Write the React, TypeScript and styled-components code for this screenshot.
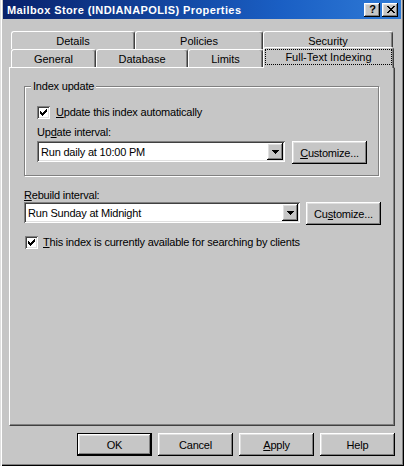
import React from "react";
import styled, { createGlobalStyle, css } from "styled-components";

const FACE = "#c6c6c6";

const GlobalStyle = createGlobalStyle`
  html, body { margin: 0; padding: 0; background: ${FACE}; }
  body {
    font-family: "Liberation Sans", Arial, sans-serif;
    font-size: 11px;
    letter-spacing: -0.2px;
    color: #000;
  }
  *, *::before, *::after { box-sizing: border-box; }
`;

const raised = css`
  box-shadow: inset -1px -1px 0 #000, inset 1px 1px 0 #fff,
    inset -2px -2px 0 #808080, inset 2px 2px 0 #dfdfdf;
`;

const sunken = css`
  box-shadow: inset 1px 1px 0 #808080, inset -1px -1px 0 #fff,
    inset 2px 2px 0 #404040, inset -2px -2px 0 #dfdfdf;
`;

const Window = styled.div`
  width: 404px;
  height: 466px;
  background: ${FACE};
  display: flex;
  flex-direction: column;
  padding: 0 3px 3px 3px;
  box-shadow: inset 1px 0 0 #dfdfdf, inset 2px 0 0 #fff, inset -1px -1px 0 #000,
    inset -2px -2px 0 #808080;
`;

const TitleBar = styled.div`
  flex: none;
  height: 19px;
  display: flex;
  align-items: center;
  padding: 0 3px 0 4px;
  background: linear-gradient(to right, #08216b, #1a5fc4 70%, #2f7ad6);
  color: #fff;
  font-weight: bold;
  font-size: 11px;
  letter-spacing: 0.4px;
`;

const TitleText = styled.span`
  flex: 1;
  white-space: nowrap;
`;

const CaptionButtons = styled.div`
  display: flex;
  gap: 2px;
  letter-spacing: 0;
`;

const CaptionButton = styled.div`
  width: 16px;
  height: 14px;
  background: ${FACE};
  ${raised};
  display: flex;
  align-items: center;
  justify-content: center;
  color: #000;
  font-weight: bold;
  font-size: 11px;
  line-height: 14px;
  padding: 0 0 1px 1px;
`;

const Body = styled.div`
  flex: 1;
  display: flex;
  flex-direction: column;
  padding: 12px 6px 0 6px;
`;

const TabStrip = styled.div`
  display: flex;
  flex-direction: column;
  padding-left: 2px;
`;

const TabRow = styled.div`
  display: flex;
  height: 18px;
`;

const Tab = styled.div<{ $w: number; $selected?: boolean }>`
  position: relative;
  flex: none;
  width: ${(p) => p.$w}px;
  height: 18px;
  display: flex;
  align-items: center;
  justify-content: center;
  background: ${FACE};
  border-top: 1px solid #fff;
  border-left: 1px solid #fff;
  border-right: 1px solid #404040;
  border-radius: 3px 3px 0 0;
  box-shadow: inset -1px 0 0 #808080;
  white-space: nowrap;
  letter-spacing: 0;
  ${(p) =>
    p.$selected &&
    css`
      height: 21px;
      margin-top: -2px;
      z-index: 1;
      align-items: stretch;
      padding: 1px 1px 3px 1px;
    `}
`;

const FocusRing = styled.span`
  flex: 1;
  display: flex;
  align-items: center;
  justify-content: center;
  outline: 1px dotted #000;
  outline-offset: -1px;
`;

const Panel = styled.div`
  flex: 1;
  display: flex;
  flex-direction: column;
  background: ${FACE};
  border-top: 1px solid #fff;
  border-left: 1px solid #fff;
  border-right: 1px solid #404040;
  border-bottom: 1px solid #404040;
  box-shadow: inset -1px -1px 0 #808080;
  padding: 12px 14px 0 14px;
`;

const Group = styled.fieldset`
  margin: 0 1px 0 0;
  padding: 13px 12px 11px 12px;
  border: 1px solid #808080;
  box-shadow: inset 1px 1px 0 #fff, 1px 1px 0 #fff;
  display: flex;
  flex-direction: column;
  min-width: 0;
`;

const Legend = styled.legend`
  margin-left: -6px;
  padding: 0 2px;
  line-height: 13px;
  background: ${FACE};
`;

const CheckRow = styled.label<{ $gap: number; $indent?: number }>`
  display: flex;
  align-items: center;
  gap: ${(p) => p.$gap}px;
  height: 13px;
  line-height: 13px;
  white-space: nowrap;
  margin-top: ${(p) => p.$indent ?? 0}px;
  padding-left: ${(p) => (p.$indent ? 1 : 0)}px;
`;

const CheckBox = styled.span`
  flex: none;
  width: 13px;
  height: 13px;
  background: #fff;
  ${sunken};
  display: flex;
  align-items: center;
  justify-content: center;
`;

const FieldLabel = styled.div<{ $top: number }>`
  margin-top: ${(p) => p.$top}px;
  line-height: 13px;
  height: 13px;
  white-space: nowrap;
`;

const ComboRow = styled.div<{ $top: number; $gap: number }>`
  margin-top: ${(p) => p.$top}px;
  display: flex;
  align-items: flex-start;
  gap: ${(p) => p.$gap}px;
  height: 23px;
`;

const Combo = styled.div<{ $w: number }>`
  flex: none;
  width: ${(p) => p.$w}px;
  height: 21px;
  background: #fff;
  ${sunken};
  display: flex;
  align-items: center;
  padding: 2px 2px 2px 4px;
`;

const ComboText = styled.span`
  flex: 1;
  white-space: nowrap;
`;

const DropButton = styled.span`
  flex: none;
  width: 16px;
  height: 17px;
  background: ${FACE};
  ${raised};
  display: flex;
  align-items: center;
  justify-content: center;
  padding-left: 1px;
`;

const Button = styled.div<{ $default?: boolean }>`
  flex: none;
  width: 75px;
  height: 23px;
  background: ${FACE};
  display: flex;
  align-items: center;
  justify-content: center;
  white-space: nowrap;
  ${raised};
  ${(p) =>
    p.$default &&
    css`
      box-shadow: inset 0 0 0 1px #000, inset -2px -2px 0 #000, inset 2px 2px 0 #fff,
        inset -3px -3px 0 #808080, inset 3px 3px 0 #dfdfdf;
    `}
`;

const ButtonRow = styled.div`
  flex: none;
  display: flex;
  justify-content: flex-end;
  gap: 6px;
  margin-top: 7px;
  margin-bottom: 7px;
`;

const CheckMark = () => (
  <svg width="7" height="7" viewBox="0 0 7 7" shapeRendering="crispEdges">
    <path
      d="M0 2h1v1h1v1h1v-1h1v-1h1v-1h1v-1h1v3h-1v1h-1v1h-1v1h-1v1h-1v-1h-1v-1h-1z"
      fill="#000"
    />
  </svg>
);

const DownArrow = () => (
  <svg width="7" height="4" viewBox="0 0 7 4" shapeRendering="crispEdges">
    <path d="M0 0h7v1h-1v1h-1v1h-1v1h-1v-1h-1v-1h-1v-1h-1z" fill="#000" />
  </svg>
);

const CloseGlyph = () => (
  <svg width="8" height="7" viewBox="0 0 8 7" shapeRendering="crispEdges">
    <path
      d="M0 0h2v1h-2zM6 0h2v1h-2zM1 1h2v1h-2zM5 1h2v1h-2zM2 2h4v1h-4zM3 3h2v1h-2zM2 4h4v1h-4zM1 5h2v1h-2zM5 5h2v1h-2zM0 6h2v1h-2zM6 6h2v1h-2z"
      fill="#000"
    />
  </svg>
);

const row1 = [
  { label: "Details", w: 124 },
  { label: "Policies", w: 128 },
  { label: "Security", w: 130 },
];

const row2 = [
  { label: "General", w: 85, selected: false },
  { label: "Database", w: 92, selected: false },
  { label: "Limits", w: 75, selected: false },
  { label: "Full-Text Indexing", w: 131, selected: true },
];

export default function App() {
  return (
    <>
      <GlobalStyle />
      <Window>
        <TitleBar>
          <TitleText>Mailbox Store (INDIANAPOLIS) Properties</TitleText>
          <CaptionButtons>
            <CaptionButton>?</CaptionButton>
            <CaptionButton>
              <CloseGlyph />
            </CaptionButton>
          </CaptionButtons>
        </TitleBar>
        <Body>
          <TabStrip>
            <TabRow>
              {row1.map((t) => (
                <Tab key={t.label} $w={t.w}>
                  {t.label}
                </Tab>
              ))}
            </TabRow>
            <TabRow>
              {row2.map((t) => (
                <Tab key={t.label} $w={t.w} $selected={t.selected}>
                  {t.selected ? <FocusRing>{t.label}</FocusRing> : t.label}
                </Tab>
              ))}
            </TabRow>
          </TabStrip>
          <Panel>
            <Group>
              <Legend>Index update</Legend>
              <CheckRow $gap={6}>
                <CheckBox>
                  <CheckMark />
                </CheckBox>
                <span>
                  <u>U</u>pdate this index automatically
                </span>
              </CheckRow>
              <FieldLabel $top={7}>
                Up<u>d</u>ate interval:
              </FieldLabel>
              <ComboRow $top={2} $gap={7}>
                <Combo $w={248}>
                  <ComboText>Run daily at 10:00 PM</ComboText>
                  <DropButton>
                    <DownArrow />
                  </DropButton>
                </Combo>
                <Button>
                  <span>
                    <u>C</u>ustomize...
                  </span>
                </Button>
              </ComboRow>
            </Group>
            <FieldLabel $top={13}>
              <u>R</u>ebuild interval:
            </FieldLabel>
            <ComboRow $top={0} $gap={6}>
              <Combo $w={276}>
                <ComboText>Run Sunday at Midnight</ComboText>
                <DropButton>
                  <DownArrow />
                </DropButton>
              </Combo>
              <Button>
                <span>
                  Cu<u>s</u>tomize...
                </span>
              </Button>
            </ComboRow>
            <CheckRow $gap={5} $indent={11}>
              <CheckBox>
                <CheckMark />
              </CheckBox>
              <span>
                <u>T</u>his index is currently available for searching by clients
              </span>
            </CheckRow>
          </Panel>
          <ButtonRow>
            <Button $default>OK</Button>
            <Button>Cancel</Button>
            <Button>
              <span>
                <u>A</u>pply
              </span>
            </Button>
            <Button>Help</Button>
          </ButtonRow>
        </Body>
      </Window>
    </>
  );
}
